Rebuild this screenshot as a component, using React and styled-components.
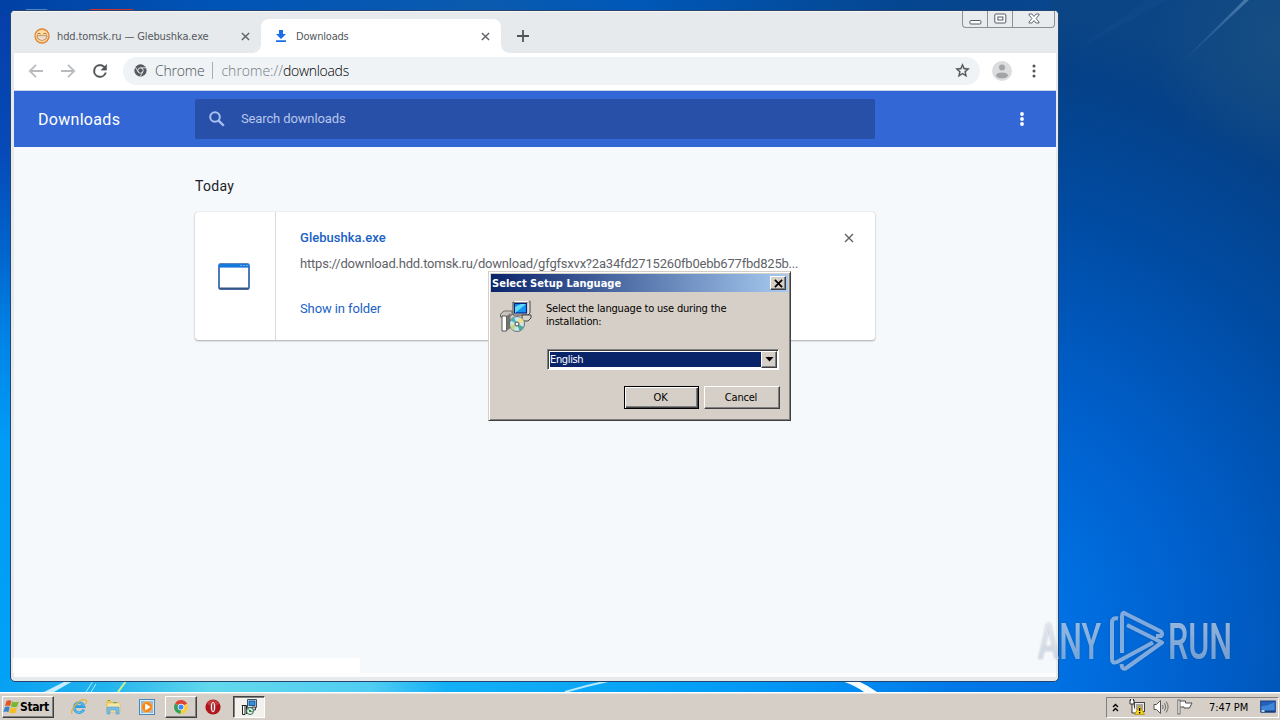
import React from "react";
import styled, { createGlobalStyle, css } from "styled-components";

const GlobalStyle = createGlobalStyle`
  * {
    box-sizing: border-box;
  }

  body {
    margin: 0;
    overflow: hidden;
  }

  button {
    margin: 0;
    padding: 0;
    border: 0;
    background: none;
    font: inherit;
    color: inherit;
  }
`;

const tahoma = `"DejaVu Sans Condensed", "DejaVu Sans", sans-serif`;

/* ---------- desktop ---------- */

const Screen = styled.div`
  width: 1280px;
  height: 720px;
  display: flex;
  flex-direction: column;
  font-family: ${tahoma};
  font-size: 11px;
`;

const Desktop = styled.main`
  position: relative;
  flex: 1;
  overflow: hidden;
`;

const WallpaperArt = styled.svg`
  position: absolute;
  inset: 0;
`;

const WatermarkArt = styled.svg`
  position: absolute;
  left: 1030px;
  top: 600px;
  overflow: visible;
  filter: drop-shadow(0 0 1px rgba(40, 60, 90, 0.5));
`;

function Wallpaper() {
  return (
    <WallpaperArt width="1280" height="692" viewBox="0 0 1280 692">
      <defs>
        <linearGradient id="left" x1="0" y1="0" x2="0" y2="1">
          <stop offset="0" stopColor="#063ea8" />
          <stop offset="0.22" stopColor="#064ab8" />
          <stop offset="0.36" stopColor="#0064cc" />
          <stop offset="0.5" stopColor="#0086e8" />
          <stop offset="0.64" stopColor="#009cf5" />
          <stop offset="1" stopColor="#00a2f6" />
        </linearGradient>
        <linearGradient id="top" x1="0" y1="0" x2="1" y2="0">
          <stop offset="0" stopColor="#0140a4" />
          <stop offset="0.2" stopColor="#0054b6" />
          <stop offset="0.45" stopColor="#0a5aae" />
          <stop offset="0.6" stopColor="#0058b8" />
          <stop offset="0.85" stopColor="#054690" />
          <stop offset="1" stopColor="#08468e" />
        </linearGradient>
        <radialGradient
          id="right"
          gradientUnits="userSpaceOnUse"
          cx="940"
          cy="640"
          r="640"
        >
          <stop offset="0" stopColor="#0080f0" />
          <stop offset="0.2" stopColor="#0070e2" />
          <stop offset="0.42" stopColor="#005fcb" />
          <stop offset="0.7" stopColor="#004ba2" />
          <stop offset="0.9" stopColor="#054189" />
          <stop offset="1" stopColor="#0b4585" />
        </radialGradient>
        <linearGradient id="bottom" gradientUnits="userSpaceOnUse" x1="0" y1="0" x2="1060" y2="0">
          <stop offset="0" stopColor="#08a0f2" />
          <stop offset="0.1" stopColor="#22b4ee" />
          <stop offset="0.2" stopColor="#62d8ec" />
          <stop offset="0.35" stopColor="#50cdf2" />
          <stop offset="0.42" stopColor="#14b0f6" />
          <stop offset="0.65" stopColor="#04a0f6" />
          <stop offset="0.78" stopColor="#0090f4" />
          <stop offset="0.9" stopColor="#0078e8" />
          <stop offset="1" stopColor="#0073e4" />
        </linearGradient>
        <linearGradient id="ray" x1="0" y1="1" x2="1" y2="0">
          <stop offset="0" stopColor="#5c8fc8" stopOpacity="0" />
          <stop offset="1" stopColor="#6f9cc6" stopOpacity="0.6" />
        </linearGradient>
        <radialGradient
          id="corner"
          gradientUnits="userSpaceOnUse"
          cx="1280"
          cy="40"
          r="130"
        >
          <stop offset="0" stopColor="#1d5280" stopOpacity="0.65" />
          <stop offset="1" stopColor="#1d5280" stopOpacity="0" />
        </radialGradient>
      </defs>
      <rect width="1280" height="692" fill="url(#left)" />
      <rect width="1060" height="14" fill="url(#top)" />
      <rect x="1050" width="230" height="692" fill="url(#right)" />
      <rect x="1120" width="160" height="200" fill="url(#corner)" />
      <rect y="680" width="1060" height="12" fill="url(#bottom)" />
      <path d="M1174 70L1246 -2L1251 -2Z" fill="url(#ray)" />
      <path d="M1075 50L1150 -2L1172 -2Z" fill="#3d78b4" opacity="0.08" />
      <path d="M44 692L66 681H73L54 692Z" fill="#e6f8ff" opacity="0.85" />
      <path d="M86 692L93 681M91 692L96 684" stroke="#a6ecf8" strokeWidth="1" />
      <path d="M118 692L126 681" stroke="#cdf08a" strokeWidth="2" />
      <path d="M565 692Q585 686 608 681" stroke="#b5e9fc" strokeWidth="2" fill="none" />
      <path d="M842 681H858Q869 686 877 692H864Q856 686 842 681Z" fill="#f4fcff" />
    </WallpaperArt>
  );
}

const DesktopShortcut = styled.div`
  position: absolute;
  left: ${(p) => p.$x}px;
  top: 9px;
  width: ${(p) => p.$width}px;
  height: 6px;
  border-radius: 2px;
  background: ${(p) => p.$color};
`;

/* ---------- browser window ---------- */

const BrowserWindow = styled.section`
  position: absolute;
  left: 10px;
  top: 10px;
  width: 1049px;
  height: 672px;
  display: flex;
  flex-direction: column;
  border: 1px solid #24466e;
  border-radius: 5px;
  overflow: hidden;
  background: #e6eaed;
`;

const TabStrip = styled.div`
  position: relative;
  display: flex;
  align-items: flex-end;
  height: 42px;
  padding-left: 10px;
  border-top: 1px solid #f7f5f5;
  background: #e6eaed;
`;

const Tab = styled.div`
  position: relative;
  display: flex;
  align-items: center;
  width: 240px;
  height: 34px;
  padding: 0 11px 0 13px;
  border-radius: 8px 8px 0 0;
  color: #54585c;
  letter-spacing: ${(p) => p.$spacing || 0}px;

  ${(p) =>
    p.$active &&
    css`
      background: #fff;

      &::before,
      &::after {
        content: "";
        position: absolute;
        bottom: 0;
        width: 8px;
        height: 8px;
      }

      &::before {
        left: -8px;
        background: radial-gradient(circle at 0 0, #e6eaed 7.5px, #fff 8px);
      }

      &::after {
        right: -8px;
        background: radial-gradient(circle at 100% 0, #e6eaed 7.5px, #fff 8px);
      }
    `}
`;

const TabTitle = styled.span`
  flex: 1;
  margin-left: ${(p) => p.$gap}px;
  white-space: nowrap;
`;

const NewTabButton = styled.button`
  display: flex;
  align-items: center;
  height: 34px;
  margin-left: 15px;
`;

const CaptionButtons = styled.div`
  position: absolute;
  top: -1px;
  right: 3px;
  display: flex;
  height: 17px;
  border: 1px solid #8b9094;
  border-top: 0;
  border-radius: 0 0 4px 4px;
  background: #e9ecef;
`;

const CaptionButton = styled.button`
  display: flex;
  align-items: center;
  justify-content: center;
  width: ${(p) => p.$width}px;

  & + & {
    border-left: 1px solid #8b9094;
  }
`;

const Toolbar = styled.div`
  display: flex;
  align-items: center;
  height: 38px;
  margin: 0 2px 0 3px;
  padding: 0 12px 2px 12px;
  border-bottom: 1px solid #ccd5ea;
  background: #fff;
`;

const NavButton = styled.button`
  display: flex;
  justify-content: center;
  width: 20px;
  margin-right: 12px;
`;

const Omnibox = styled.div`
  display: flex;
  align-items: center;
  flex: 1;
  height: 28px;
  margin-left: 1px;
  padding: 0 9px 0 11px;
  border-radius: 14px;
  background: #eff3f6;
  font-family: "Open Sans", "Noto Sans", sans-serif;
  font-size: 14px;
  font-weight: 300;
  color: #4c5156;
  white-space: nowrap;
`;

const SiteName = styled.span`
  margin-left: 8px;
  padding-right: 8px;
  border-right: 1px solid #a9adb1;
  line-height: 17px;
  letter-spacing: -0.2px;
`;

const Address = styled.span`
  flex: 1;
  margin-left: 8px;
  color: #74797e;

  b {
    font-weight: 300;
    color: #000;
    letter-spacing: -0.3px;
  }
`;

const ToolbarEnd = styled.div`
  display: flex;
  align-items: center;
  gap: 19px;
  margin-left: 12px;
  padding-right: 7px;
`;

const Page = styled.div`
  flex: 1;
  display: flex;
  flex-direction: column;
  margin: 0 2px 4px 3px;
  background: #f6f9fb;
  border-bottom: 4px solid #fdfdfe;
  font-family: Roboto, sans-serif;
`;

const PageHeader = styled.header`
  display: grid;
  grid-template-columns: 181px 680px 1fr;
  align-items: center;
  height: 56px;
  flex: none;
  background: #3367d6;
  color: #fff;
`;

const PageTitle = styled.h1`
  margin: 0 0 0 24px;
  font-size: 16px;
  font-weight: 400;
  letter-spacing: 0.3px;
`;

const SearchBox = styled.div`
  display: flex;
  align-items: center;
  height: 40px;
  padding-left: 13px;
  border-radius: 2px;
  background: #2950a8;
  color: #b6c6ec;
  font-size: 13px;
  letter-spacing: -0.13px;
`;

const SearchLabel = styled.span`
  margin: -2px 0 0 15px;
`;

const HeaderMenu = styled.button`
  justify-self: end;
  display: flex;
  margin-right: 31px;
`;

const Content = styled.div`
  flex: 1;
  width: 680px;
  margin-left: 181px;
`;

const DateHeading = styled.h2`
  margin: 30px 0 16px;
  font-size: 14px;
  font-weight: 400;
  line-height: 19px;
  letter-spacing: 0.3px;
  color: #202124;
`;

const DownloadCard = styled.article`
  display: flex;
  height: 128px;
  border-radius: 3px;
  background: #fff;
  box-shadow: 0 1px 2px rgba(60, 64, 67, 0.4), 0 0 1px rgba(60, 64, 67, 0.3);
`;

const FileIconCell = styled.div`
  display: flex;
  align-items: center;
  justify-content: center;
  width: 81px;
  padding-right: 2px;
  border-right: 1px solid #d8d9db;
`;

const FileDetails = styled.div`
  flex: 1;
  padding: 18px 0 0 24px;
  font-size: 13px;
  line-height: 16px;
  white-space: nowrap;
`;

const FileName = styled.div`
  color: #1a62c6;
  font-weight: 500;
  letter-spacing: 0.03px;
`;

const FileUrl = styled.div`
  margin-top: 10px;
  color: #5f6368;
  letter-spacing: -0.205px;
`;

const FolderLink = styled.div`
  margin-top: 29px;
  color: #1a62c6;
  letter-spacing: -0.1px;
`;

const RemoveButton = styled.button`
  align-self: flex-start;
  display: flex;
  margin: 21px 21px 0 0;
`;

const StatusBubble = styled.div`
  width: 347px;
  height: 15px;
  margin-left: -1px;
  background: #fff;
`;

const Cross = ({ size = 9, color = "#5f6368", weight = 1.6 }) => (
  <svg width={size} height={size} viewBox="0 0 10 10">
    <path d="M1 1L9 9M9 1L1 9" stroke={color} strokeWidth={weight} />
  </svg>
);

const Dots = ({ color, r }) => (
  <svg width="6" height="16" viewBox="0 0 6 16" fill={color}>
    <circle cx="3" cy="3" r={r} />
    <circle cx="3" cy="8" r={r} />
    <circle cx="3" cy="13" r={r} />
  </svg>
);

const GrinIcon = () => (
  <svg width="16" height="16" viewBox="0 0 16 16">
    <circle cx="8" cy="8" r="7" fill="#ffdca5" stroke="#df8532" strokeWidth="1.3" />
    <path d="M3.4 6.2Q5 4.2 6.6 6M9.4 6Q11 4.2 12.6 6.2" stroke="#a5652a" strokeWidth="0.9" fill="none" />
    <path d="M3 7.8H13Q12.5 12.2 8 12.2Q3.5 12.2 3 7.8Z" fill="#fff" stroke="#a5652a" strokeWidth="0.8" />
    <path d="M4 9.9H12" stroke="#c58d56" strokeWidth="0.6" />
  </svg>
);

const DownloadIcon = () => (
  <svg width="14" height="14" viewBox="0 0 14 14">
    <path d="M5 1H9V5H12L7 10L2 5H5ZM2 11.3H12V13H2Z" fill="#1a6fe8" />
  </svg>
);

const ArrowIcon = ({ flip }) => (
  <svg width="16" height="16" viewBox="0 0 16 16" transform={flip ? "scale(-1 1)" : undefined}>
    <path d="M15 8H2M8 1.8L1.8 8L8 14.2" stroke="#b9bcbf" strokeWidth="1.8" fill="none" />
  </svg>
);

const ReloadIcon = () => (
  <svg width="20" height="20" viewBox="0 0 24 24">
    <path
      d="M17.65 6.35A7.96 7.96 0 0 0 12 4a8 8 0 1 0 7.73 10h-2.08A6 6 0 1 1 12 6c1.66 0 3.14.69 4.22 1.78L13 11h7V4z"
      fill="#505459"
      stroke="#505459"
      strokeWidth="0.4"
    />
  </svg>
);

const ChromeMonoIcon = () => (
  <svg width="13" height="13" viewBox="0 0 14 14">
    <circle cx="7" cy="7" r="6.6" fill="#565a5f" />
    <circle cx="7" cy="7" r="2.9" fill="none" stroke="#eff3f6" strokeWidth="1" />
    <path d="M7 4.1H13M4.5 8.5L1.5 3.3M9.5 8.5L6.6 13.5" stroke="#eff3f6" strokeWidth="0.9" />
  </svg>
);

const StarIcon = () => (
  <svg width="17" height="17" viewBox="0 0 24 24">
    <path
      d="M22 9.24l-7.19-.62L12 2 9.19 8.63 2 9.24l5.46 4.73L5.82 21 12 17.27 18.18 21l-1.63-7.03L22 9.24zM12 15.4l-3.76 2.27 1-4.28-3.32-2.88 4.38-.38L12 6.1l1.71 4.04 4.38.38-3.32 2.88 1 4.28L12 15.4z"
      fill="#505459"
      stroke="#505459"
      strokeWidth="0.4"
    />
  </svg>
);

const AvatarIcon = () => (
  <svg width="20" height="20" viewBox="0 0 20 20">
    <circle cx="10" cy="10" r="10" fill="#dcdddf" />
    <circle cx="10" cy="6.6" r="3" fill="#a2a4a7" />
    <ellipse cx="10" cy="14.4" rx="6" ry="2.9" fill="#a2a4a7" />
  </svg>
);

const SearchIcon = () => (
  <svg width="18" height="18" viewBox="0 0 18 18">
    <circle cx="7" cy="7" r="4.8" stroke="#a9c0f2" strokeWidth="2" fill="none" />
    <path d="M10.6 10.6L15.8 15.8" stroke="#a9c0f2" strokeWidth="2.3" />
  </svg>
);

const FileWindowIcon = () => (
  <svg width="32" height="27" viewBox="0 0 32 27">
    <rect x="1" y="1" width="30" height="25" rx="1.5" fill="#fff" stroke="#2459a5" strokeWidth="1.6" />
    <rect x="1" y="1" width="30" height="3.6" fill="#1778dc" />
    <path d="M22 2.5H24M25 2.5H27M28 2.5H30" stroke="#75abe6" strokeWidth="1.2" />
    <path d="M1.5 25.5H30.5" stroke="#345584" strokeWidth="2" />
  </svg>
);

function Browser() {
  return (
    <BrowserWindow>
      <TabStrip>
        <Tab $spacing={-0.12}>
          <GrinIcon />
          <TabTitle $gap={7}>hdd.tomsk.ru — Glebushka.exe</TabTitle>
          <Cross />
        </Tab>
        <Tab $active $spacing={-0.2}>
          <DownloadIcon />
          <TabTitle $gap={8}>Downloads</TabTitle>
          <Cross />
        </Tab>
        <NewTabButton>
          <svg width="14" height="14" viewBox="0 0 14 14">
            <path d="M7 1V13M1 7H13" stroke="#505459" strokeWidth="1.8" />
          </svg>
        </NewTabButton>
        <CaptionButtons>
          <CaptionButton $width={24}>
            <svg width="13" height="13" viewBox="0 0 13 13">
              <rect x="0.9" y="7.5" width="11" height="3.5" rx="1" fill="#fff" stroke="#555a64" />
            </svg>
          </CaptionButton>
          <CaptionButton $width={25}>
            <svg width="13" height="12" viewBox="0 0 13 12">
              <rect x="0.8" y="1" width="11" height="9" rx="1" fill="#fff" stroke="#555a64" />
              <rect x="3.9" y="4" width="5" height="3" fill="#fff" stroke="#555a64" />
            </svg>
          </CaptionButton>
          <CaptionButton $width={42}>
            <svg width="12" height="12" viewBox="0 0 12 12">
              <path
                d="M1 1H4L6 3.5L8 1H11V2L8 5.5L11 9V10H8L6 7.5L4 10H1V9L4 5.5L1 2Z"
                fill="#fff"
                stroke="#555a64"
                strokeWidth="0.9"
              />
            </svg>
          </CaptionButton>
        </CaptionButtons>
      </TabStrip>

      <Toolbar>
        <NavButton>
          <ArrowIcon />
        </NavButton>
        <NavButton>
          <ArrowIcon flip />
        </NavButton>
        <NavButton>
          <ReloadIcon />
        </NavButton>
        <Omnibox>
          <ChromeMonoIcon />
          <SiteName>Chrome</SiteName>
          <Address>
            chrome://<b>downloads</b>
          </Address>
          <StarIcon />
        </Omnibox>
        <ToolbarEnd>
          <AvatarIcon />
          <Dots color="#505459" r={1.5} />
        </ToolbarEnd>
      </Toolbar>

      <Page>
        <PageHeader>
          <PageTitle>Downloads</PageTitle>
          <SearchBox>
            <SearchIcon />
            <SearchLabel>Search downloads</SearchLabel>
          </SearchBox>
          <HeaderMenu>
            <Dots color="#fff" r={1.9} />
          </HeaderMenu>
        </PageHeader>
        <Content>
          <DateHeading>Today</DateHeading>
          <DownloadCard>
            <FileIconCell>
              <FileWindowIcon />
            </FileIconCell>
            <FileDetails>
              <FileName>Glebushka.exe</FileName>
              <FileUrl>
                https://download.hdd.tomsk.ru/download/gfgfsxvx?2a34fd2715260fb0ebb677fbd825b...
              </FileUrl>
              <FolderLink>Show in folder</FolderLink>
            </FileDetails>
            <RemoveButton>
              <Cross size={10} weight={1.4} />
            </RemoveButton>
          </DownloadCard>
        </Content>
        <StatusBubble />
      </Page>
    </BrowserWindow>
  );
}

/* ---------- setup dialog ---------- */

const raised = css`
  border: 1px solid;
  border-color: #fff #404040 #404040 #fff;
  box-shadow: inset -1px -1px 0 #808080;
  background: #d6cfc7;
`;

const Dialog = styled.section`
  position: absolute;
  left: 488px;
  top: 271px;
  width: 303px;
  height: 150px;
  padding: 2px;
  border: 1px solid;
  border-color: #d6cfc7 #404040 #404040 #d6cfc7;
  box-shadow: inset 1px 1px 0 #fff, inset -1px -1px 0 #808080;
  background: #d6cfc7;
  color: #000;
`;

const TitleBar = styled.div`
  display: flex;
  align-items: center;
  justify-content: space-between;
  height: 18px;
  padding: 0 2px 0 1px;
  background: linear-gradient(90deg, #0a246a, #a6caf0);
  color: #fff;
  font-weight: bold;
  letter-spacing: 0.02px;
`;

const TitleClose = styled.button`
  ${raised}
  display: flex;
  align-items: center;
  justify-content: center;
  width: 16px;
  height: 14px;
`;

const DialogBody = styled.div`
  display: grid;
  grid-template-columns: 46px 1fr;
  padding: 8px 8px 0 9px;
`;

const Message = styled.p`
  margin: 0;
  height: 49px;
  padding-top: 2px;
  line-height: 13px;
  letter-spacing: -0.19px;
`;

const LanguageSelect = styled.div`
  grid-column: 2;
  display: flex;
  width: 232px;
  height: 21px;
  margin-left: 1px;
  padding: 1px;
  border: 1px solid;
  border-color: #808080 #fff #fff #808080;
  box-shadow: inset 1px 1px 0 #404040;
  background: #fff;
`;

const SelectedLanguage = styled.span`
  flex: 1;
  margin: 1px 0 1px 1px;
  line-height: 16px;
  background: #0a246a;
  color: #fff;
  letter-spacing: -0.35px;
`;

const SelectArrow = styled.button`
  ${raised}
  display: flex;
  align-items: center;
  justify-content: center;
  width: 16px;
`;

const DialogButtons = styled.div`
  grid-column: 1 / -1;
  display: flex;
  justify-content: flex-end;
  gap: 5px;
  margin-top: 16px;
`;

const DialogButton = styled.button`
  ${raised}
  width: ${(p) => (p.$primary ? 75 : 76)}px;
  height: 23px;
  padding-right: 2px;
  letter-spacing: -0.2px;

  ${(p) =>
    p.$primary &&
    css`
      border-color: #000;
      box-shadow: inset 1px 1px 0 #fff, inset -1px -1px 0 #404040,
        inset -2px -2px 0 #808080;
    `}
`;

const InstallerIcon = ({ size = 32 }) => (
  <svg width={size} height={size} viewBox="0 0 32 32">
    <path d="M13 2H28L30 1V13L28 15H13Z" fill="#e2e0dc" stroke="#222" strokeWidth="0.8" />
    <path d="M13 2L15 1H30L28 2Z" fill="#fff" />
    <rect x="14.5" y="3.5" width="12" height="9.5" fill="#1597f0" stroke="#06217c" strokeWidth="1.2" />
    <path d="M15 13V7L21 4H26Z" fill="#61d8fa" />
    <path d="M22 15H31V18L28 21H22Z" fill="#d5d2cc" stroke="#222" strokeWidth="0.8" />
    <path d="M0.5 14L4 11H12V15L8 17H0.5Z" fill="#c9c5bd" stroke="#555" strokeWidth="0.8" />
    <path d="M2 16H6.5V31H2Z" fill="#fff" stroke="#333" strokeWidth="0.8" />
    <path d="M6.5 16L10.5 13V28L6.5 31Z" fill="#77746e" />
    <circle cx="17" cy="24" r="7.5" fill="#cfe4e6" stroke="#3d5a5c" strokeWidth="0.8" />
    <path d="M17 24L10.5 20.5A7.5 7.5 0 0 1 14 17.2Z" fill="#49b5b9" />
    <path d="M17 24L20 17.2A7.5 7.5 0 0 1 24 21.5Z" fill="#f0df86" />
    <path d="M17 24L24 27A7.5 7.5 0 0 1 19.5 31Z" fill="#4da99e" />
    <path d="M17 24L13.5 30.6A7.5 7.5 0 0 1 9.8 25.5Z" fill="#b9d78e" />
    <circle cx="17" cy="24" r="2" fill="#fff" stroke="#333" strokeWidth="0.9" />
  </svg>
);

const InstallerSmallIcon = () => (
  <svg width="16" height="16" viewBox="0 0 16 16">
    <path d="M6.5 0.5H15.5V8.5H6.5Z" fill="#d9e4ea" stroke="#39506a" />
    <rect x="8" y="2" width="6" height="4.5" fill="#2b93e0" stroke="#123c84" strokeWidth="0.8" />
    <path d="M11 8H14.5V11H11Z" fill="#c8c5bf" stroke="#222" strokeWidth="0.8" />
    <path d="M0.8 6.5H5.5V8M1.5 7V15.5H4V7" fill="#fff" stroke="#222" />
    <path d="M5.5 7V15" stroke="#222" />
    <circle cx="9" cy="12" r="3.5" fill="#e3f3e6" stroke="#2c6e50" />
    <path d="M9 12L7 9.5M9 12L12 13" stroke="#3da176" />
    <circle cx="9" cy="12" r="0.9" fill="#184b32" />
  </svg>
);

function SetupDialog() {
  return (
    <Dialog>
      <TitleBar>
        Select Setup Language
        <TitleClose>
          <Cross size={9} color="#000" weight={1.9} />
        </TitleClose>
      </TitleBar>
      <DialogBody>
        <InstallerIcon />
        <Message>
          Select the language to use during the
          <br />
          installation:
        </Message>
        <LanguageSelect>
          <SelectedLanguage>English</SelectedLanguage>
          <SelectArrow>
            <svg width="9" height="5" viewBox="0 0 9 5">
              <path d="M0.5 0H8.5L4.5 4.5Z" />
            </svg>
          </SelectArrow>
        </LanguageSelect>
        <DialogButtons>
          <DialogButton $primary>OK</DialogButton>
          <DialogButton>Cancel</DialogButton>
        </DialogButtons>
      </DialogBody>
    </Dialog>
  );
}

/* ---------- watermark ---------- */

function Watermark() {
  return (
    <WatermarkArt width="240" height="90" viewBox="0 0 240 90">
      <defs>
        <linearGradient id="fade" x1="0" y1="0" x2="0" y2="1">
          <stop offset="0" stopColor="#fff" stopOpacity="0.6" />
          <stop offset="1" stopColor="#cfdcec" stopOpacity="0.5" />
        </linearGradient>
      </defs>
      <g fill="url(#fade)" fontFamily="Roboto, sans-serif" fontSize="50" fontWeight="500">
        <text x="8" y="59" textLength="63" lengthAdjust="spacingAndGlyphs">
          ANY
        </text>
        <text x="138" y="59" textLength="64" lengthAdjust="spacingAndGlyphs">
          RUN
        </text>
      </g>
      <g
        fill="none"
        stroke="#d5e4f9"
        strokeOpacity="0.58"
        strokeWidth="4"
        strokeLinejoin="round"
      >
        <path d="M88 18.5Q82 17 82 23V59Q82 64 87 62L123 42.5" />
        <path d="M92 53V16Q92 11 96 14L131 31.5Q133 34 131 36L126 36" />
        <path d="M97 25L132 42.5L97 67.5Q92 71 91.5 64" />
      </g>
    </WatermarkArt>
  );
}

/* ---------- taskbar ---------- */

const TaskbarRow = styled.footer`
  display: flex;
  align-items: center;
  height: 28px;
  padding: 1px 1px 0 2px;
  border-top: 1px solid #fff;
  box-shadow: inset 0 1px 0 #eae6e2;
  background: #d6cfc7;
  color: #000;
`;

const StartButton = styled.button`
  ${raised}
  display: flex;
  align-items: center;
  width: 52px;
  height: 22px;
  margin-right: 9px;
  font-size: 12px;
  font-weight: bold;
  letter-spacing: -0.4px;
`;

const TaskButton = styled.button`
  display: flex;
  align-items: center;
  justify-content: center;
  width: ${(p) => (p.$state ? 32 : 34)}px;
  height: 22px;
  padding-right: 2px;
  ${(p) =>
    p.$state === "open" &&
    css`
      ${raised}
      padding: 0;
    `}
  ${(p) =>
    p.$state === "pressed" &&
    css`
      margin-left: 2px;
      padding: 0;
      border: 1px solid;
      border-color: #404040 #fff #fff #404040;
      box-shadow: inset 1px 1px 0 #808080;
      background: #f3f1ee;
    `}
`;

const Tray = styled.div`
  display: flex;
  align-items: center;
  width: 173px;
  height: 21px;
  margin-left: auto;
  padding: 0 2px 0 5px;
  border: 1px solid;
  border-color: #808080 #fff #fff #808080;
`;

const TrayIcons = styled.div`
  display: flex;
  align-items: center;
  gap: 8px;
  margin-left: 10px;
`;

const Clock = styled.time`
  margin: 0 auto 0 16px;
  white-space: nowrap;
  letter-spacing: -0.1px;
`;

const WindowsFlag = () => (
  <svg width="17" height="16" viewBox="0 0 17 16">
    <path d="M3.5 2Q6 .3 8.5 2L7 7.2Q4.8 5.8 2 7.3Z" fill="#e35425" />
    <path d="M9.3 2.4Q12.5 4 15.8 2.5L14.2 7.6Q11 9 7.9 7.6Z" fill="#75b72f" />
    <path d="M1.8 8.2Q4.5 6.7 6.8 8.1L5.3 13.2Q3 11.8.3 13.3Z" fill="#3c83cf" />
    <path d="M7.6 8.6Q10.8 10 14 8.6L12.4 13.7Q9.5 15.2 6.2 13.6Z" fill="#f6bd22" />
  </svg>
);

const IeIcon = () => (
  <svg width="18" height="18" viewBox="0 0 18 18" fill="none">
    <path d="M13.8 11.5A5 5 0 1 1 14 8.6H5" stroke="#2f9ee0" strokeWidth="2.7" />
    <path d="M13.8 11.5A5 5 0 1 1 14 8.6" stroke="#7accf5" strokeWidth="0.8" />
    <path d="M2.2 15.8C-1 13 10-1 16 2.2Q17.5 3.3 15.5 6" stroke="#e3b43c" strokeWidth="1.2" />
  </svg>
);

const ExplorerIcon = () => (
  <svg width="18" height="18" viewBox="0 0 18 18">
    <path d="M2 2H7L8 4H15V13H2Z" fill="#e8c867" />
    <path d="M3 5H16V14H3Z" fill="#f8e8a5" stroke="#d9b65a" strokeWidth="0.6" />
    <path d="M4 2.5H6M9 4.6H13" stroke="#60a860" />
    <path d="M3 16V10Q3 9 4 9H14Q15 9 15 10V16H12V12H6V16Z" fill="#79bde8" stroke="#4f9acb" strokeWidth="0.6" />
  </svg>
);

const PlayerIcon = () => (
  <svg width="16" height="16" viewBox="0 0 16 16">
    <rect x="0.5" y="0.5" width="15" height="15" fill="#d3eafa" stroke="#4b87bd" />
    <rect x="2" y="2" width="12" height="12" fill="#8bbce3" />
    <circle cx="8" cy="8" r="5.6" fill="#f18a1c" stroke="#fbc077" strokeWidth="0.7" />
    <path d="M6.2 4.4L11.6 8L6.2 11.6Z" fill="#fff" />
  </svg>
);

const ChromeIcon = () => (
  <svg width="14" height="14" viewBox="0 0 16 16">
    <path d="M8 8L1.2 4A7.8 7.8 0 0 1 14.8 4.2Z" fill="#df4335" />
    <path d="M8 8L14.8 4.2A7.8 7.8 0 0 1 7.5 15.8Z" fill="#f9cd3c" />
    <path d="M8 8L7.5 15.8A7.8 7.8 0 0 1 1.2 4Z" fill="#34a253" />
    <path d="M8 4.2H14.8L14.2 3.2H8Z" fill="#df4335" />
    <circle cx="8" cy="8" r="3.7" fill="#fff" />
    <circle cx="8" cy="8" r="2.9" fill="#4285f4" />
  </svg>
);

const OperaIcon = () => (
  <svg width="16" height="16" viewBox="0 0 16 16">
    <circle cx="8" cy="8" r="7.6" fill="#b3141c" />
    <path d="M2 5Q4 1 8 1Q12 1 14 5Q8 8 2 5Z" fill="#dc5353" opacity="0.6" />
    <ellipse cx="8" cy="8" rx="2.6" ry="5.6" fill="#fbf3f3" stroke="#7c0a10" strokeWidth="0.5" />
    <ellipse cx="8" cy="8" rx="0.8" ry="4.2" fill="#8f1a1f" />
  </svg>
);

const NetworkIcon = () => (
  <svg width="16" height="16" viewBox="0 0 16 16">
    <rect x="5.5" y="3.5" width="10" height="9" fill="#eee" stroke="#444" />
    <rect x="7" y="5" width="7" height="6" fill="#a7a7a2" />
    <path d="M1 1V5H5V1M3 5V14H8" stroke="#333" fill="#fff" />
    <path d="M1.5 0V2M4.5 0V2" stroke="#333" />
    <path d="M10.5 6.5L15.5 15.5H5.8Z" fill="#f8d51e" stroke="#b8920c" strokeWidth="0.8" />
    <path d="M10.6 9V12M10.6 13V14.4" stroke="#000" strokeWidth="1.4" />
  </svg>
);

const VolumeIcon = () => (
  <svg width="16" height="16" viewBox="0 0 16 16" fill="none" stroke="#6c6c6c">
    <path d="M1 5.5H3.5L7.5 1.5V14.5L3.5 10.5H1Z" fill="#fff" stroke="#555" />
    <path d="M9.5 6Q10.8 8 9.5 10M11.5 4.2Q14 8 11.5 11.8M13.2 2.5Q17 8 13.2 13.5" />
  </svg>
);

const FlagIcon = () => (
  <svg width="16" height="16" viewBox="0 0 16 16">
    <path d="M2.5 2H8.5V4H15L12.5 9H7V8H3.5" fill="#fff" stroke="#4e4e4e" />
    <rect x="0.9" y="1" width="2.1" height="14" fill="#fff" stroke="#4e4e4e" strokeWidth="0.8" />
  </svg>
);

const ShowDesktopIcon = () => (
  <svg width="16" height="14" viewBox="0 0 16 14">
    <rect x="0.7" y="1" width="14.6" height="11" fill="#2460b8" stroke="#173f83" />
    <path d="M1.5 6Q8 6 14.5 2V11.5H1.5Z" fill="#3e86dc" />
    <rect x="1" y="10.5" width="14" height="2" fill="#173d7a" />
    <rect x="1.5" y="10" width="3" height="2" fill="#b5cfe8" />
  </svg>
);

function Taskbar() {
  return (
    <TaskbarRow>
      <StartButton>
        <WindowsFlag />
        Start
      </StartButton>
      <TaskButton>
        <IeIcon />
      </TaskButton>
      <TaskButton>
        <ExplorerIcon />
      </TaskButton>
      <TaskButton>
        <PlayerIcon />
      </TaskButton>
      <TaskButton $state="open">
        <ChromeIcon />
      </TaskButton>
      <TaskButton>
        <OperaIcon />
      </TaskButton>
      <TaskButton $state="pressed">
        <InstallerSmallIcon />
      </TaskButton>
      <Tray>
        <svg width="7" height="9" viewBox="0 0 7 9">
          <path d="M1 4L3.5 1.5L6 4M1 8L3.5 5.5L6 8" fill="none" stroke="#000" strokeWidth="1.4" />
        </svg>
        <TrayIcons>
          <NetworkIcon />
          <VolumeIcon />
          <FlagIcon />
        </TrayIcons>
        <Clock>7:47 PM</Clock>
        <ShowDesktopIcon />
      </Tray>
    </TaskbarRow>
  );
}

function App() {
  return (
    <>
      <GlobalStyle />
      <Screen>
        <Desktop>
          <Wallpaper />
          <DesktopShortcut $x={25} $width={23} $color="#4c87bd" />
          <DesktopShortcut $x={89} $width={45} $color="#d22e2c" />
          <Browser />
          <SetupDialog />
          <Watermark />
        </Desktop>
        <Taskbar />
      </Screen>
    </>
  );
}

export default App;
